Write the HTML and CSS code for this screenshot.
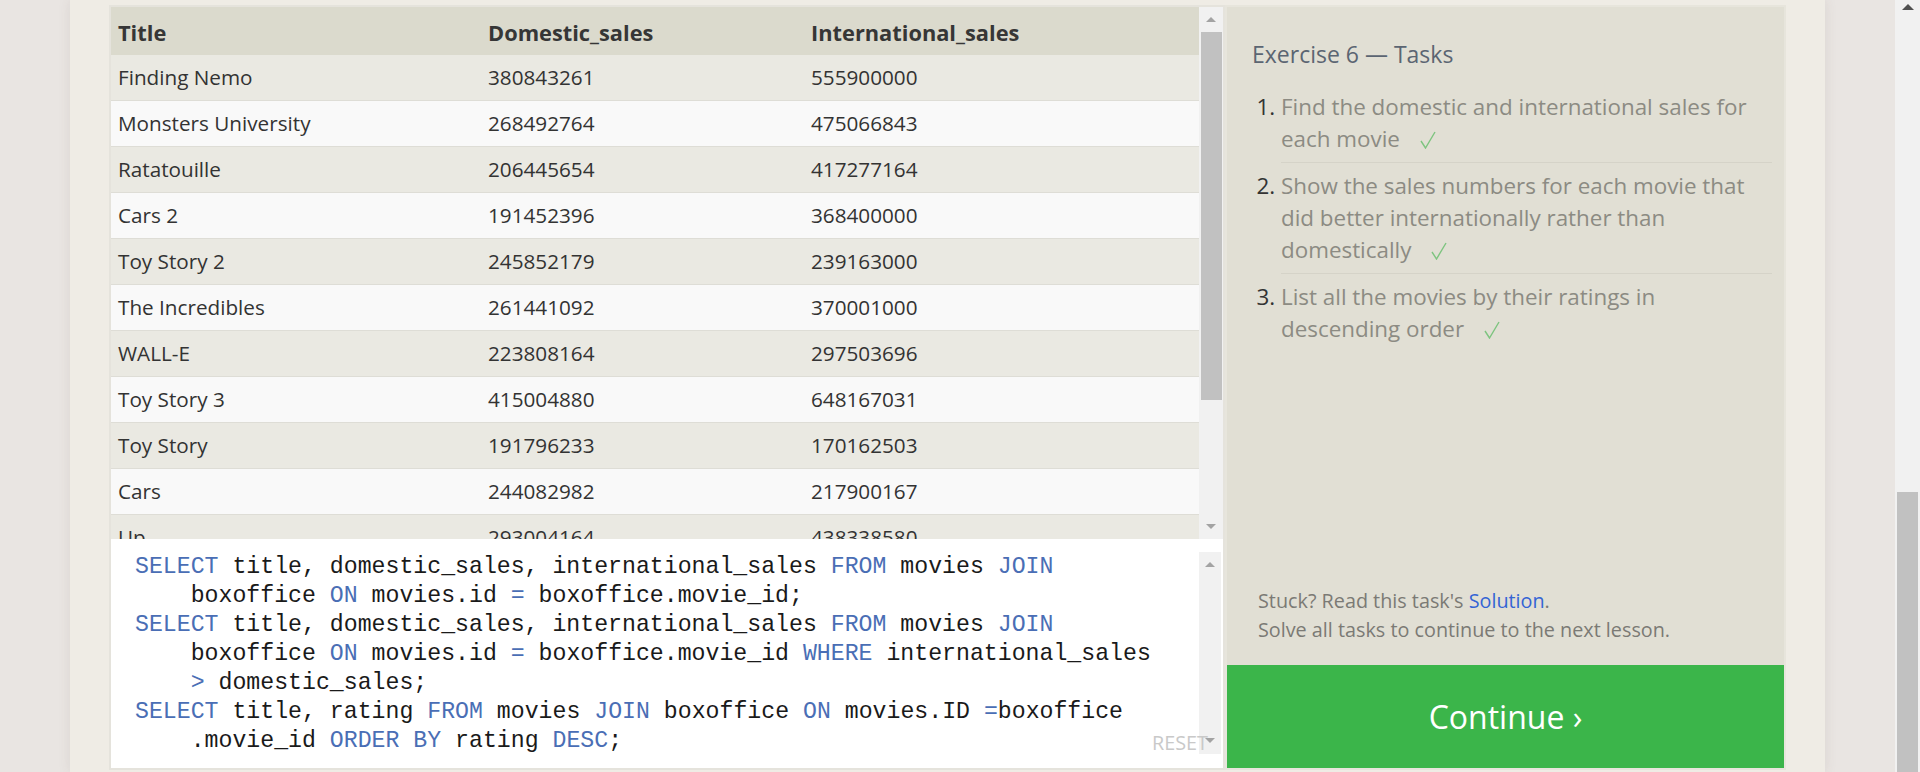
FILE: index.html
```html
<!DOCTYPE html>
<html lang="en">
<head>
<meta charset="utf-8">
<title>SQL Lesson - Exercise 6</title>
<link rel="stylesheet" href="styles.css">
</head>
<body>
<div class="page">
  <div class="panel">
    <div class="left">
      <div class="results">
        <div class="table-wrap">
          <table class="grid">
            <colgroup><col class="c1"><col class="c2"><col class="c3"></colgroup>
            <thead>
              <tr><th>Title</th><th>Domestic_sales</th><th>International_sales</th></tr>
            </thead>
            <tbody>
              <tr><td>Finding Nemo</td><td>380843261</td><td>555900000</td></tr>
              <tr><td>Monsters University</td><td>268492764</td><td>475066843</td></tr>
              <tr><td>Ratatouille</td><td>206445654</td><td>417277164</td></tr>
              <tr><td>Cars 2</td><td>191452396</td><td>368400000</td></tr>
              <tr><td>Toy Story 2</td><td>245852179</td><td>239163000</td></tr>
              <tr><td>The Incredibles</td><td>261441092</td><td>370001000</td></tr>
              <tr><td>WALL-E</td><td>223808164</td><td>297503696</td></tr>
              <tr><td>Toy Story 3</td><td>415004880</td><td>648167031</td></tr>
              <tr><td>Toy Story</td><td>191796233</td><td>170162503</td></tr>
              <tr><td>Cars</td><td>244082982</td><td>217900167</td></tr>
              <tr><td>Up</td><td>293004164</td><td>438338580</td></tr>
            </tbody>
          </table>
        </div>
        <div class="vscroll">
          <div class="btn"><span class="tri up"></span></div>
          <div class="track"><div class="thumb"></div></div>
          <div class="btn"><span class="tri down"></span></div>
        </div>
      </div>
      <div class="editor">
        <div class="code">
          <div class="ln"><span class="kw">SELECT</span> title, domestic_sales, international_sales <span class="kw">FROM</span> movies <span class="kw">JOIN</span></div>
          <div class="ln wrap">boxoffice <span class="kw">ON</span> movies.id <span class="kw">=</span> boxoffice.movie_id;</div>
          <div class="ln"><span class="kw">SELECT</span> title, domestic_sales, international_sales <span class="kw">FROM</span> movies <span class="kw">JOIN</span></div>
          <div class="ln wrap">boxoffice <span class="kw">ON</span> movies.id <span class="kw">=</span> boxoffice.movie_id <span class="kw">WHERE</span> international_sales</div>
          <div class="ln wrap"><span class="kw">&gt;</span> domestic_sales;</div>
          <div class="ln"><span class="kw">SELECT</span> title, rating <span class="kw">FROM</span> movies <span class="kw">JOIN</span> boxoffice <span class="kw">ON</span> movies.ID <span class="kw">=</span>boxoffice</div>
          <div class="ln wrap">.movie_id <span class="kw">ORDER BY</span> rating <span class="kw">DESC</span>;</div>
        </div>
        <div class="escroll">
          <span class="tri up"></span>
          <span class="tri down"></span>
        </div>
        <div class="reset">RESET</div>
      </div>
    </div>
    <div class="right">
      <h2 class="ex-title">Exercise 6 — Tasks</h2>
      <ol class="tasks">
        <li>Find the domestic and international sales for each movie<svg class="check" viewBox="0 0 16 18" width="16" height="18"><polyline points="1,10 5.5,17 15,1"/></svg></li>
        <li>Show the sales numbers for each movie that did better internationally rather than domestically<svg class="check" viewBox="0 0 16 18" width="16" height="18"><polyline points="1,10 5.5,17 15,1"/></svg></li>
        <li>List all the movies by their ratings in descending order<svg class="check" viewBox="0 0 16 18" width="16" height="18"><polyline points="1,10 5.5,17 15,1"/></svg></li>
      </ol>
      <div class="spacer"></div>
      <p class="hint">Stuck? Read this task's <a href="#" class="link">Solution</a>.<br>Solve all tasks to continue to the next lesson.</p>
      <a href="#" class="continue">Continue ›</a>
    </div>
  </div>
</div>
<div class="pscroll">
  <div class="pbtn"><span class="tri up dark"></span></div>
  <div class="ptrack"><div class="pthumb"></div></div>
</div>
</body>
</html>
```

FILE: styles.css
```css
* { box-sizing: border-box; }

html, body {
  margin: 0;
  padding: 0;
  height: 772px;
  overflow: hidden;
}

body {
  display: flex;
  font-family: "Open Sans", "Noto Sans", sans-serif;
  color: #333;
  background: #e9e5e2;
}

.page {
  flex: 1;
  display: flex;
  justify-content: center;
  background: #e9e5e2;
}

.panel {
  width: 1755px;
  height: 772px;
  padding: 5px 39px 2px;
  background: #efece5;
  box-shadow: 0 0 12px rgba(90, 70, 60, 0.10);
  display: flex;
}

/* ---------- left column ---------- */
.left {
  width: 1116px;
  border: 2px solid #e5e3dc;
  display: flex;
  flex-direction: column;
}

.results {
  height: 532px;
  display: flex;
}

.table-wrap {
  flex: 1;
  overflow: hidden;
  background: #f9f9f9;
}

.grid {
  width: 100%;
  table-layout: fixed;
  border-collapse: separate;
  border-spacing: 0;
  font-size: 20.7px;
  color: #333;
}

.c1 { width: 370px; }
.c2 { width: 323px; }

.grid th,
.grid td {
  text-align: left;
  padding: 0 7px;
  white-space: nowrap;
  overflow: hidden;
}

.grid th {
  height: 48px;
  line-height: 30px;
  padding-top: 4px;
  font-size: 21.8px;
  font-weight: 700;
  background: #dbdacd;
  color: #363636;
}

.grid td {
  line-height: 45px;
  border-bottom: 1px solid #deddd6;
}

.grid tbody tr:nth-child(odd) td { background: #eae9e2; }
.grid tbody tr:nth-child(even) td { background: #f9f9f9; }

.vscroll {
  width: 24px;
  background: #f1f1f1;
  display: flex;
  flex-direction: column;
}

.btn {
  height: 25px;
  display: flex;
  align-items: center;
  justify-content: center;
}

.track {
  flex: 1;
  padding: 0 1px 0 2px;
}

.thumb {
  height: 368px;
  background: #c1c1c1;
}

.tri {
  width: 0;
  height: 0;
  border-left: 5px solid transparent;
  border-right: 5px solid transparent;
}

.tri.up { border-bottom: 5px solid #a3a3a3; }
.tri.down { border-top: 5px solid #a3a3a3; }

.tri.up.dark {
  border-left: 6px solid transparent;
  border-right: 6px solid transparent;
  border-bottom: 6px solid #505050;
}

/* ---------- editor ---------- */
.editor {
  height: 229px;
  background: #fff;
  display: flex;
  position: relative;
}

.code {
  flex: 1;
  padding: 14px 0 0 24px;
  font-family: "Liberation Mono", "DejaVu Sans Mono", monospace;
  font-size: 23.2px;
  line-height: 29px;
  color: #1a1a1a;
}

.ln { white-space: pre; }
.ln.wrap { padding-left: 4ch; }

.kw { color: #4a6eb5; }

.escroll {
  width: 22px;
  margin: 13px 2px 14px 0;
  background: #f1f1f1;
  display: flex;
  flex-direction: column;
  justify-content: space-between;
  align-items: center;
  padding: 10px 0 11px;
}

.reset {
  position: absolute;
  right: 15px;
  bottom: 14px;
  font-size: 19.8px;
  line-height: 22px;
  color: #c9c9c9;
}

/* ---------- right column ---------- */
.right {
  width: 561px;
  border: 2px solid #e7e5dc;
  background: #e1dfd4;
  display: flex;
  flex-direction: column;
}

.ex-title {
  margin: 31px 12px 0 25px;
  font-size: 23px;
  line-height: 32px;
  font-weight: 400;
  color: #5b6572;
}

.tasks {
  margin: 14px 12px 0 27px;
  padding: 0 0 0 27px;
  font-size: 22.4px;
  line-height: 32px;
  color: #8c8b83;
}

.tasks li {
  padding: 7px 0;
}

.tasks li:not(:last-child) {
  border-bottom: 1px solid #d5d3c8;
}

.tasks li::marker {
  color: #333;
}

.check {
  margin-left: 20px;
  vertical-align: -2px;
  fill: none;
  stroke: #7dc47f;
  stroke-width: 1.4;
}

.spacer { flex: 1; }

.hint {
  margin: 0 12px 21px 31px;
  font-size: 19.8px;
  line-height: 28.5px;
  color: #7b7a75;
}

.link {
  color: #3464d4;
  text-decoration: none;
}

.continue {
  height: 103px;
  display: flex;
  align-items: center;
  justify-content: center;
  background: #3bb54a;
  color: #fff;
  font-size: 32px;
  text-decoration: none;
}

/* ---------- page scrollbar ---------- */
.pscroll {
  width: 25px;
  background: #f1f1f1;
  display: flex;
  flex-direction: column;
}

.pbtn {
  height: 15px;
  display: flex;
  justify-content: center;
  padding-top: 4px;
}

.ptrack {
  flex: 1;
  padding: 481px 2px 0 2px;
}

.pthumb {
  height: 280px;
  background: #c1c1c1;
}
```
